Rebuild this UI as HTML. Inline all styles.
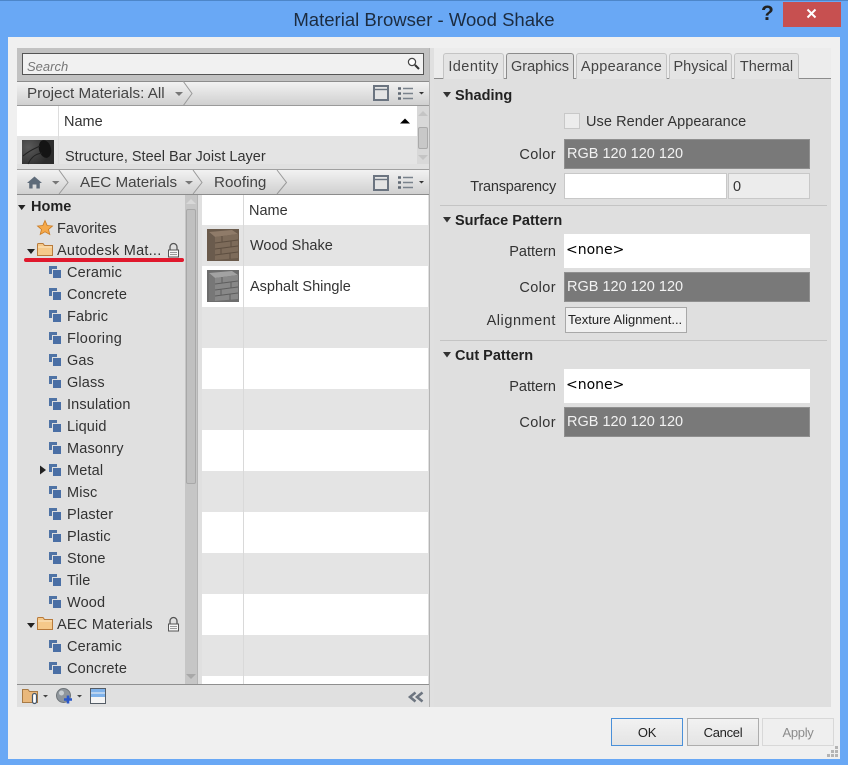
<!DOCTYPE html>
<html>
<head>
<meta charset="utf-8">
<style>
html,body{margin:0;padding:0;width:848px;height:765px;overflow:hidden;background:#69a8f5}
*{box-sizing:border-box}
.a{position:absolute}
.t{position:absolute;font-family:"Liberation Sans",sans-serif;font-size:14.5px;color:#333;white-space:nowrap;line-height:18px}
.r{text-align:right}
.b{font-weight:bold;color:#222}
.c{font-size:15.2px;color:#444}
.n{letter-spacing:.15px}
.crumb{background:linear-gradient(#f2f2f2,#d0d0d0)}
.tab{position:absolute;top:53px;height:26px;border:1px solid #c4c4c4;border-bottom:none;border-radius:3px 3px 0 0;background:#e4e4e4;font-family:"Liberation Sans",sans-serif;font-size:14.5px;color:#444;text-align:center;line-height:26px;white-space:nowrap}
.col{position:absolute;left:564px;width:246px;height:30px;background:#797979;border:1px solid #8f8f8f;color:#f2f2f2;font-family:"Liberation Sans",sans-serif;font-size:14.5px;line-height:29px;padding-left:2px;white-space:nowrap}
.none{position:absolute;left:564px;width:246px;height:34px;background:#fff;font-family:"DejaVu Sans",sans-serif;font-size:14px;color:#000;line-height:32px;padding-left:2px}
.btn{position:absolute;top:718px;height:28px;width:72px;text-align:center;font-family:"Liberation Sans",sans-serif;font-size:13px;letter-spacing:-.3px;line-height:27px;background:linear-gradient(#f2f2f2,#e4e4e4);border:1px solid #adadad;color:#222}
svg{position:absolute;overflow:visible}
</style>
</head>
<body>
<div class="a" style="left:0;top:0;width:848px;height:1px;background:#4d86c9"></div>
<div class="t" style="left:0;top:8px;width:848px;text-align:center;font-size:18.55px;line-height:24px;color:#1c2c40">Material Browser - Wood Shake</div>
<div class="t b" style="left:761px;top:2px;font-size:21px;color:#222;line-height:24px">?</div>
<div class="a" style="left:783px;top:2px;width:58px;height:25px;background:#c75050"></div>
<svg style="left:806px;top:8px" width="12" height="12"><path d="M1.5 1.5L9.5 9.5M9.5 1.5L1.5 9.5" stroke="#fff" stroke-width="2"/></svg>

<div class="a" style="left:8px;top:37px;width:832px;height:722px;background:#f0f0f0"></div>

<!-- left panel -->
<div class="a" style="left:17px;top:48px;width:417px;height:659px;background:#e0e0e0"></div>
<div class="a" style="left:429px;top:48px;width:1px;height:659px;background:#b4b4b4"></div>
<div class="a" style="left:17px;top:48px;width:412px;height:33px;background:#c2c2c2"></div>
<div class="a" style="left:22px;top:53px;width:402px;height:22px;background:#f1f1f1;border:1px solid #555"></div>
<div class="t" style="left:27px;top:58px;font-size:13px;font-style:italic;color:#777">Search</div>
<svg style="left:406px;top:57px" width="16" height="14"><circle cx="6" cy="5" r="3.6" fill="#fff" stroke="#444" stroke-width="1.2"/><path d="M9 8L13 12" stroke="#333" stroke-width="2"/></svg>

<!-- crumb 1 -->
<div class="a crumb" style="left:17px;top:81px;width:412px;height:25px;border-top:1px solid #8c8c8c;border-bottom:1px solid #9a9a9a"></div>
<div class="t c" style="left:27px;top:85px">Project Materials: All</div>
<svg style="left:174px;top:81px" width="20" height="25"><path d="M1 11H9L5 15Z" fill="#777"/><path d="M9 0L18 12.5L9 25" fill="none" stroke="#999"/></svg>
<svg style="left:373px;top:85px" width="16" height="16"><rect x="1" y="1" width="14" height="14" fill="#e4e4e4" stroke="#6b7480" stroke-width="2"/><path d="M1 4.5H15" stroke="#6b7480" stroke-width="1.4"/></svg>
<svg style="left:397px;top:86px" width="28" height="16"><path d="M1 2.5H4M1 7.5H4M1 12.5H4" stroke="#5f6873" stroke-width="2.4"/><path d="M6 2.5H16M6 7.5H16M6 12.5H16" stroke="#79828c" stroke-width="1.4"/><path d="M22 6H27L24.5 8.5Z" fill="#333"/></svg>

<!-- project table -->
<div class="a" style="left:17px;top:106px;width:400px;height:30px;background:#fff"></div>
<div class="a" style="left:17px;top:136px;width:400px;height:28px;background:#e4e4e4"></div>
<div class="a" style="left:58px;top:106px;width:1px;height:58px;background:#ddd"></div>
<div class="t" style="left:64px;top:113px;color:#333">Name</div>
<svg style="left:400px;top:118px" width="11" height="6"><path d="M0 5.5L5 .5L10 5.5Z" fill="#000"/></svg>
<div class="a" style="left:22px;top:140px;width:32px;height:24px;background:radial-gradient(circle at 20% 30%,#5a5a5a,#2c2c2c 70%)"></div>
<svg style="left:22px;top:140px" width="32" height="24"><ellipse cx="23" cy="9" rx="6" ry="9" transform="rotate(-15 23 9)" fill="#141414"/><path d="M1 16C8 10 14 8 18 6M6 24C10 16 14 14 20 13" stroke="#222" fill="none"/></svg>
<div class="t" style="left:65px;top:148px;color:#333">Structure, Steel Bar Joist Layer</div>
<div class="a" style="left:417px;top:106px;width:12px;height:58px;background:#d8d8d8"></div>
<svg style="left:417px;top:110px" width="12" height="8"><path d="M1 6L6 1L11 6Z" fill="#c4c4c4"/></svg>
<div class="a" style="left:418px;top:127px;width:10px;height:22px;background:#c8c8c8;border:1px solid #aaa;border-radius:2px"></div>
<svg style="left:417px;top:153px" width="12" height="8"><path d="M1 2L6 7L11 2Z" fill="#c4c4c4"/></svg>

<!-- crumb 2 -->
<div class="a crumb" style="left:17px;top:169px;width:412px;height:26px;border-top:1px solid #a0a0a0;border-bottom:1px solid #8c8c8c"></div>
<svg style="left:27px;top:176px" width="15" height="13"><path d="M7.5 .5L15 7H12.8V12.5H9.4V8.5H5.6V12.5H2.2V7H0Z" fill="#5e6b79"/></svg>
<svg style="left:51px;top:170px" width="20" height="25"><path d="M1 11H8.5L4.7 14.5Z" fill="#777"/><path d="M8 0L17 12.5L8 24" fill="none" stroke="#999"/></svg>
<div class="t c" style="left:80px;top:174px">AEC Materials</div>
<svg style="left:184px;top:170px" width="20" height="25"><path d="M1 11H9L5 14.5Z" fill="#777"/><path d="M9 0L18 12.5L9 24" fill="none" stroke="#999"/></svg>
<div class="t c" style="left:214px;top:174px">Roofing</div>
<svg style="left:276px;top:170px" width="12" height="25"><path d="M1 0L10.5 12.5L1 24" fill="none" stroke="#999"/></svg>
<svg style="left:373px;top:175px" width="16" height="16"><rect x="1" y="1" width="14" height="14" fill="#e4e4e4" stroke="#6b7480" stroke-width="2"/><path d="M1 4.5H15" stroke="#6b7480" stroke-width="1.4"/></svg>
<svg style="left:397px;top:175px" width="28" height="16"><path d="M1 2.5H4M1 7.5H4M1 12.5H4" stroke="#5f6873" stroke-width="2.4"/><path d="M6 2.5H16M6 7.5H16M6 12.5H16" stroke="#79828c" stroke-width="1.4"/><path d="M22 6H27L24.5 8.5Z" fill="#333"/></svg>

<!-- tree scrollbar -->
<div class="a" style="left:185px;top:195px;width:12px;height:489px;background:#c6c6c6"></div>
<svg style="left:185px;top:198px" width="12" height="8"><path d="M1 6L6 1L11 6Z" fill="#d8d8d8"/></svg>
<div class="a" style="left:186px;top:209px;width:10px;height:275px;background:#c0c0c0;border:1px solid #a8a8a8;border-radius:2px"></div>
<svg style="left:185px;top:672px" width="12" height="8"><path d="M1 2L6 7L11 2Z" fill="#a8a8a8"/></svg>
<div class="a" style="left:197px;top:195px;width:1px;height:489px;background:#b5b5b5"></div>

<!-- tree -->
<svg style="left:17px;top:204px" width="10" height="8"><path d="M1 1H8.5L4.7 6Z" fill="#222"/></svg>
<div class="t b" style="left:31px;top:198px;font-size:14.5px">Home</div>
<svg style="left:37px;top:220px" width="16" height="15"><path d="M8 .5L10.2 5.5L15.5 6L11.5 9.5L12.8 14.5L8 11.8L3.2 14.5L4.5 9.5L.5 6L5.8 5.5Z" fill="#f5a94a" stroke="#c97a22" stroke-width=".8"/></svg>
<div class="t" style="left:57px;top:220px">Favorites</div>
<svg style="left:27px;top:243px" width="26" height="14"><path d="M0 6H8L4 11Z" fill="#222"/><path d="M10.5 12.5V1.5Q10.5 .5 11.5 .5H16L17.5 2.5H25.5V12.5Z" fill="#f5c98a" stroke="#b87a3a"/><path d="M11 4H25" stroke="#fbe6c4"/></svg>
<div class="t" style="left:57px;top:242px;letter-spacing:.25px">Autodesk Mat...</div>
<svg style="left:167px;top:243px" width="13" height="15"><path d="M3 7V4A3.5 3.5 0 0 1 10 4V7" fill="none" stroke="#555" stroke-width="1.3"/><rect x="1.5" y="7" width="10" height="7" fill="#f6f6f6" stroke="#555"/><path d="M3 9.5H10M3 11.5H10" stroke="#999"/></svg>
<div class="a" style="left:24px;top:258px;width:160px;height:4px;background:#e0182c;border-radius:2px"></div>

<svg style="left:48px;top:265px" width="14" height="14"><path d="M1 1H9V4H4V9H1Z" fill="#4f73a5"/><rect x="5" y="5" width="8" height="8" fill="#4a6fa5"/></svg><div class="t n" style="left:67px;top:264px">Ceramic</div>
<svg style="left:48px;top:287px" width="14" height="14"><path d="M1 1H9V4H4V9H1Z" fill="#4f73a5"/><rect x="5" y="5" width="8" height="8" fill="#4a6fa5"/></svg><div class="t n" style="left:67px;top:286px">Concrete</div>
<svg style="left:48px;top:309px" width="14" height="14"><path d="M1 1H9V4H4V9H1Z" fill="#4f73a5"/><rect x="5" y="5" width="8" height="8" fill="#4a6fa5"/></svg><div class="t n" style="left:67px;top:308px">Fabric</div>
<svg style="left:48px;top:331px" width="14" height="14"><path d="M1 1H9V4H4V9H1Z" fill="#4f73a5"/><rect x="5" y="5" width="8" height="8" fill="#4a6fa5"/></svg><div class="t" style="left:67px;top:330px;letter-spacing:.35px">Flooring</div>
<svg style="left:48px;top:353px" width="14" height="14"><path d="M1 1H9V4H4V9H1Z" fill="#4f73a5"/><rect x="5" y="5" width="8" height="8" fill="#4a6fa5"/></svg><div class="t n" style="left:67px;top:352px">Gas</div>
<svg style="left:48px;top:375px" width="14" height="14"><path d="M1 1H9V4H4V9H1Z" fill="#4f73a5"/><rect x="5" y="5" width="8" height="8" fill="#4a6fa5"/></svg><div class="t n" style="left:67px;top:374px">Glass</div>
<svg style="left:48px;top:397px" width="14" height="14"><path d="M1 1H9V4H4V9H1Z" fill="#4f73a5"/><rect x="5" y="5" width="8" height="8" fill="#4a6fa5"/></svg><div class="t n" style="left:67px;top:396px">Insulation</div>
<svg style="left:48px;top:419px" width="14" height="14"><path d="M1 1H9V4H4V9H1Z" fill="#4f73a5"/><rect x="5" y="5" width="8" height="8" fill="#4a6fa5"/></svg><div class="t n" style="left:67px;top:418px">Liquid</div>
<svg style="left:48px;top:441px" width="14" height="14"><path d="M1 1H9V4H4V9H1Z" fill="#4f73a5"/><rect x="5" y="5" width="8" height="8" fill="#4a6fa5"/></svg><div class="t n" style="left:67px;top:440px">Masonry</div>
<svg style="left:39px;top:465px" width="8" height="10"><path d="M1 0.5L7 5L1 9.5Z" fill="#222"/></svg>
<svg style="left:48px;top:463px" width="14" height="14"><path d="M1 1H9V4H4V9H1Z" fill="#4f73a5"/><rect x="5" y="5" width="8" height="8" fill="#4a6fa5"/></svg><div class="t n" style="left:67px;top:462px">Metal</div>
<svg style="left:48px;top:485px" width="14" height="14"><path d="M1 1H9V4H4V9H1Z" fill="#4f73a5"/><rect x="5" y="5" width="8" height="8" fill="#4a6fa5"/></svg><div class="t n" style="left:67px;top:484px">Misc</div>
<svg style="left:48px;top:507px" width="14" height="14"><path d="M1 1H9V4H4V9H1Z" fill="#4f73a5"/><rect x="5" y="5" width="8" height="8" fill="#4a6fa5"/></svg><div class="t n" style="left:67px;top:506px">Plaster</div>
<svg style="left:48px;top:529px" width="14" height="14"><path d="M1 1H9V4H4V9H1Z" fill="#4f73a5"/><rect x="5" y="5" width="8" height="8" fill="#4a6fa5"/></svg><div class="t n" style="left:67px;top:528px">Plastic</div>
<svg style="left:48px;top:551px" width="14" height="14"><path d="M1 1H9V4H4V9H1Z" fill="#4f73a5"/><rect x="5" y="5" width="8" height="8" fill="#4a6fa5"/></svg><div class="t n" style="left:67px;top:550px">Stone</div>
<svg style="left:48px;top:573px" width="14" height="14"><path d="M1 1H9V4H4V9H1Z" fill="#4f73a5"/><rect x="5" y="5" width="8" height="8" fill="#4a6fa5"/></svg><div class="t n" style="left:67px;top:572px">Tile</div>
<svg style="left:48px;top:595px" width="14" height="14"><path d="M1 1H9V4H4V9H1Z" fill="#4f73a5"/><rect x="5" y="5" width="8" height="8" fill="#4a6fa5"/></svg><div class="t n" style="left:67px;top:594px">Wood</div>
<svg style="left:27px;top:617px" width="26" height="14"><path d="M0 6H8L4 11Z" fill="#222"/><path d="M10.5 12.5V1.5Q10.5 .5 11.5 .5H16L17.5 2.5H25.5V12.5Z" fill="#f5c98a" stroke="#b87a3a"/><path d="M11 4H25" stroke="#fbe6c4"/></svg>
<div class="t" style="left:57px;top:616px;letter-spacing:.25px">AEC Materials</div>
<svg style="left:167px;top:617px" width="13" height="15"><path d="M3 7V4A3.5 3.5 0 0 1 10 4V7" fill="none" stroke="#555" stroke-width="1.3"/><rect x="1.5" y="7" width="10" height="7" fill="#f6f6f6" stroke="#555"/><path d="M3 9.5H10M3 11.5H10" stroke="#999"/></svg>
<svg style="left:48px;top:639px" width="14" height="14"><path d="M1 1H9V4H4V9H1Z" fill="#4f73a5"/><rect x="5" y="5" width="8" height="8" fill="#4a6fa5"/></svg><div class="t n" style="left:67px;top:638px">Ceramic</div>
<svg style="left:48px;top:661px" width="14" height="14"><path d="M1 1H9V4H4V9H1Z" fill="#4f73a5"/><rect x="5" y="5" width="8" height="8" fill="#4a6fa5"/></svg><div class="t n" style="left:67px;top:660px">Concrete</div>

<!-- list -->
<div class="a" style="left:202px;top:195px;width:226px;height:30px;background:#fff"></div>
<div class="a" style="left:202px;top:225px;width:226px;height:41px;background:#e4e4e4"></div>
<div class="a" style="left:202px;top:266px;width:226px;height:41px;background:#fff"></div>
<div class="a" style="left:202px;top:307px;width:226px;height:41px;background:#e4e4e4"></div>
<div class="a" style="left:202px;top:348px;width:226px;height:41px;background:#fff"></div>
<div class="a" style="left:202px;top:389px;width:226px;height:41px;background:#e4e4e4"></div>
<div class="a" style="left:202px;top:430px;width:226px;height:41px;background:#fff"></div>
<div class="a" style="left:202px;top:471px;width:226px;height:41px;background:#e4e4e4"></div>
<div class="a" style="left:202px;top:512px;width:226px;height:41px;background:#fff"></div>
<div class="a" style="left:202px;top:553px;width:226px;height:41px;background:#e4e4e4"></div>
<div class="a" style="left:202px;top:594px;width:226px;height:41px;background:#fff"></div>
<div class="a" style="left:202px;top:635px;width:226px;height:41px;background:#e4e4e4"></div>
<div class="a" style="left:202px;top:676px;width:226px;height:8px;background:#fff"></div>
<div class="a" style="left:243px;top:195px;width:1px;height:489px;background:#d9d9d9"></div>
<div class="t" style="left:249px;top:202px">Name</div>
<svg style="left:207px;top:229px" width="32" height="32"><rect width="32" height="32" fill="#6a5a4b"/><path d="M2 3L25 1L31 5L8 8Z" fill="#8f7b69"/><path d="M2 3L8 8V31H2Z" fill="#6a5b4d"/><path d="M8 8L31 5V29L8 31Z" fill="#7d6b5a"/><path d="M8 14L31 11M8 20L31 17M8 26L31 23M15 7V13M24 12V18M14 19V25M23 24V30" stroke="#5d4e40" fill="none"/></svg>
<svg style="left:207px;top:270px" width="32" height="32"><rect width="32" height="32" fill="#6d6d6d"/><path d="M2 3L25 1L31 5L8 8Z" fill="#a2a2a2"/><path d="M2 3L8 8V31H2Z" fill="#777"/><path d="M8 8L31 5V29L8 31Z" fill="#888"/><path d="M8 14L31 11M8 20L31 17M8 26L31 23M15 7V13M24 12V18M14 19V25M23 24V30" stroke="#5e5e5e" fill="none"/></svg>
<div class="t" style="left:250px;top:237px">Wood Shake</div>
<div class="t" style="left:250px;top:278px">Asphalt Shingle</div>

<!-- bottom toolbar -->
<div class="a" style="left:17px;top:684px;width:412px;height:1px;background:#8f8f8f"></div>
<svg style="left:22px;top:688px" width="28" height="17"><path d="M.5 14.5V1.5H6L7.5 3.5H15.5V14.5Z" fill="#e9b87c" stroke="#a87a45"/><rect x="10.5" y="5.5" width="4" height="10" rx="2" fill="#fff" stroke="#46586c" stroke-width="1.2"/><path d="M21 7H26L23.5 9.5Z" fill="#444"/></svg>
<svg style="left:56px;top:688px" width="28" height="17"><circle cx="7.5" cy="7.5" r="7" fill="#8f969c" stroke="#6e7479"/><circle cx="5.5" cy="5" r="2.5" fill="#c8ced2"/><path d="M12 7.5V15.5M8 11.5H16" stroke="#2b58c8" stroke-width="2.6"/><path d="M21 7H26L23.5 9.5Z" fill="#444"/></svg>
<svg style="left:90px;top:688px" width="16" height="16"><rect x=".5" y=".5" width="15" height="15" fill="#f4f4f4" stroke="#555d66"/><rect x="1" y="1" width="14" height="3.5" fill="#7fb2ea"/><rect x="1" y="5.5" width="14" height="3.5" fill="#7fb2ea"/></svg>
<svg style="left:408px;top:691px" width="16" height="13"><path d="M7.5 1.5L2 6L7.5 10.5M14.5 1.5L9 6L14.5 10.5" fill="none" stroke="#6d7580" stroke-width="2.6"/></svg>

<!-- right panel -->
<div class="a" style="left:434px;top:48px;width:397px;height:659px;background:#dfdfdf"></div>
<div class="a" style="left:434px;top:48px;width:397px;height:31px;background:#ececec"></div>
<div class="a" style="left:434px;top:78px;width:397px;height:1px;background:#8c8c8c"></div>
<div class="tab" style="left:443px;width:61px;letter-spacing:.45px">Identity</div>
<div class="tab" style="left:506px;width:68px;top:53px;height:26px;background:#dfdfdf;border-color:#8c8c8c;z-index:2">Graphics</div>
<div class="tab" style="left:576px;width:91px;letter-spacing:.3px">Appearance</div>
<div class="tab" style="left:669px;width:63px">Physical</div>
<div class="tab" style="left:734px;width:65px">Thermal</div>

<svg style="left:442px;top:91px" width="10" height="8"><path d="M1 1H9L5 6.5Z" fill="#333"/></svg>
<div class="t b" style="left:455px;top:87px">Shading</div>
<div class="a" style="left:564px;top:113px;width:16px;height:16px;background:#ececec;border:1px solid #c8c8c8"></div>
<div class="t" style="left:586px;top:113px;letter-spacing:.07px">Use Render Appearance</div>
<div class="t r" style="left:440px;width:116px;top:146px;letter-spacing:.4px">Color</div>
<div class="col" style="top:139px">RGB 120 120 120</div>
<div class="t r" style="left:440px;width:116px;top:178px;letter-spacing:-.2px">Transparency</div>
<div class="a" style="left:564px;top:173px;width:163px;height:26px;background:#fff;border:1px solid #c8c8c8"></div>
<div class="a" style="left:728px;top:173px;width:82px;height:26px;background:#ececec;border:1px solid #c8c8c8"></div>
<div class="t" style="left:733px;top:178px">0</div>
<div class="a" style="left:440px;top:205px;width:387px;height:1px;background:#c4c4c4"></div>

<svg style="left:442px;top:216px" width="10" height="8"><path d="M1 1H9L5 6.5Z" fill="#333"/></svg>
<div class="t b" style="left:455px;top:212px">Surface Pattern</div>
<div class="t r" style="left:440px;width:116px;top:243px">Pattern</div>
<div class="none" style="top:234px">&lt;none&gt;</div>
<div class="t r" style="left:440px;width:116px;top:279px;letter-spacing:.4px">Color</div>
<div class="col" style="top:272px">RGB 120 120 120</div>
<div class="t r" style="left:440px;width:116px;top:312px;letter-spacing:.55px">Alignment</div>
<div class="a" style="left:565px;top:307px;width:122px;height:26px;background:#f0f0f0;border:1px solid #a8a8a8;font-family:'Liberation Sans',sans-serif;font-size:13px;line-height:24px;padding-left:2px;color:#222;white-space:nowrap">Texture Alignment...</div>
<div class="a" style="left:440px;top:340px;width:387px;height:1px;background:#c4c4c4"></div>

<svg style="left:442px;top:351px" width="10" height="8"><path d="M1 1H9L5 6.5Z" fill="#333"/></svg>
<div class="t b" style="left:455px;top:347px">Cut Pattern</div>
<div class="t r" style="left:440px;width:116px;top:378px">Pattern</div>
<div class="none" style="top:369px">&lt;none&gt;</div>
<div class="t r" style="left:440px;width:116px;top:414px;letter-spacing:.4px">Color</div>
<div class="col" style="top:407px">RGB 120 120 120</div>

<!-- buttons -->
<div class="btn" style="left:611px;border-color:#4a90d9">OK</div>
<div class="btn" style="left:687px">Cancel</div>
<div class="btn" style="left:762px;background:#efefef;border-color:#d8d8d8;color:#8c8c8c">Apply</div>
<svg style="left:826px;top:745px" width="14" height="13"><path d="M9 1h3v3H9zM5 5h3v3H5zM9 5h3v3H9zM1 9h3v3H1zM5 9h3v3H5zM9 9h3v3H9z" fill="#b4b4b4"/></svg>
</body>
</html>
